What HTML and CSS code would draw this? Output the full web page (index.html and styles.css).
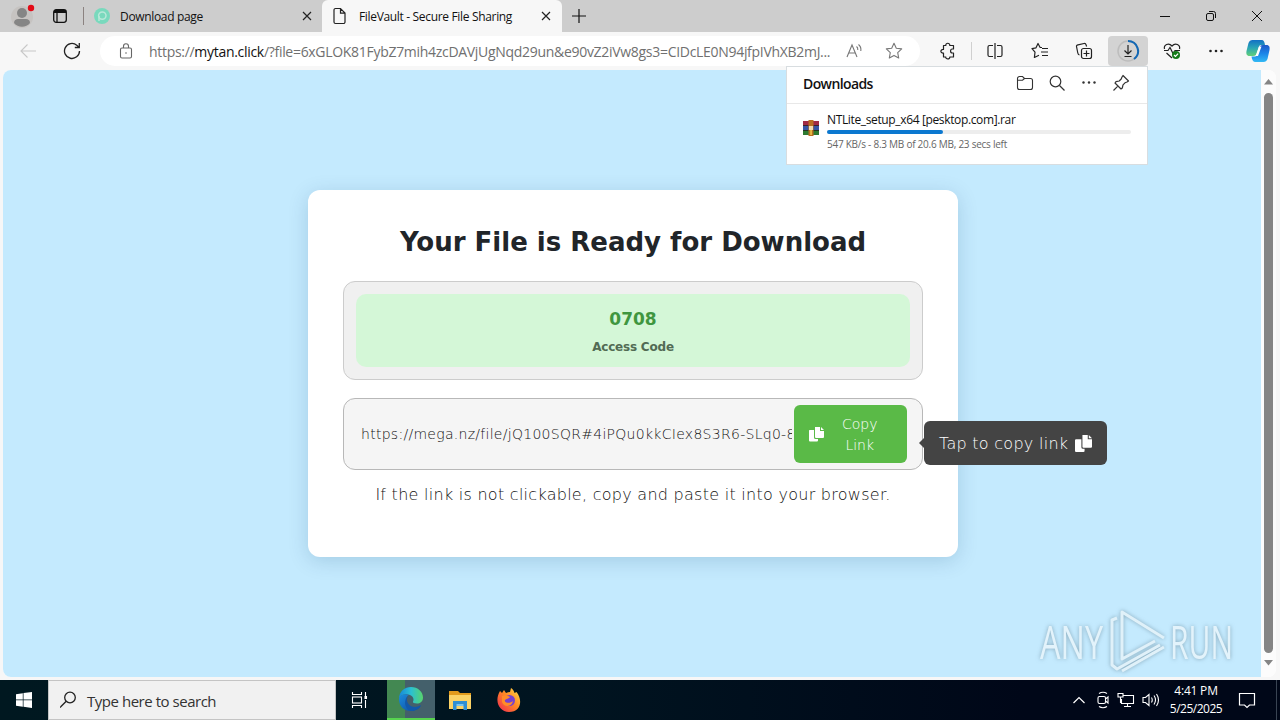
FILE: index.html
```
<!DOCTYPE html>
<html lang="en">
<head>
    <meta charset="UTF-8">
    <meta name="viewport" content="width=device-width, initial-scale=1.0">
    <title>FileVault - Secure File Sharing</title>
    <link rel="stylesheet" href="styles.css">
</head>
<body>
    <!-- Tabs -->
    <div class="tab-strip">
        <div class="profile">
            <svg width="32" height="32" viewBox="0 0 32 32"><circle cx="16" cy="17" r="11" fill="#c6c3c1"/><circle cx="16" cy="13" r="5" fill="#858585"/><path d="M8 23c0-3 2-4 4-4h8c2 0 4 1 4 4-4 5-12 5-16 0z" fill="#858585"/><circle cx="25" cy="8" r="3.2" fill="#e30b17"/></svg>
        </div>
        <div class="workspaces">
            <svg width="16" height="16" viewBox="0 0 16 16" fill="none" stroke="#111" stroke-width="1.3"><rect x="1.7" y="1.7" width="12.6" height="12.6" rx="2.5"/><path d="M2 3.5h12" stroke-width="3"/><path d="M5 4v10"/></svg>
        </div>
        <div class="tab">
            <svg class="tab-icon" width="18" height="18" viewBox="0 0 18 18"><circle cx="9" cy="9" r="8" fill="#79d9bd"/><circle cx="9.3" cy="8.6" r="3.7" fill="none" stroke="#b9e8d9" stroke-width="1.5"/><path d="M6 9v5" stroke="#b9e8d9" stroke-width="1.5"/></svg>
            <span class="tab-title">Download page</span>
            <svg class="tab-close" width="10" height="10" viewBox="0 0 10 10" stroke="#222" stroke-width="1.2"><path d="M1 1l8 8M9 1l-8 8"/></svg>
        </div>
        <div class="tab active">
            <svg class="tab-icon" width="18" height="18" viewBox="0 0 18 18" fill="none" stroke="#222" stroke-width="1.2"><path d="M4.500 1.500h5l4.500 4.500v9a1.500 1.500 0 0 1-1.500 1.500h-8a1.500 1.500 0 0 1-1.500-1.500v-12a1.500 1.500 0 0 1 1.500-1.500zM9.500 1.700v4.500h4.300"/></svg>
            <span class="tab-title">FileVault - Secure File Sharing</span>
            <svg class="tab-close" width="10" height="10" viewBox="0 0 10 10" stroke="#222" stroke-width="1.2"><path d="M1 1l8 8M9 1l-8 8"/></svg>
        </div>
        <div class="new-tab">
            <svg width="14" height="14" viewBox="0 0 14 14" stroke="#111" stroke-width="1.2"><path d="M7 0v14M0 7h14"/></svg>
        </div>
        <div class="window-buttons">
            <svg width="10" height="10" viewBox="0 0 10 10" stroke="#111"><path d="M0 5.500h10"/></svg>
            <svg width="10" height="10" viewBox="0 0 10 10" fill="none" stroke="#111"><rect x=".5" y="2.500" width="7" height="7" rx="1.500"/><path d="M3 .5h4.500q2 0 2 2v4.500"/></svg>
            <svg width="10" height="10" viewBox="0 0 10 10" stroke="#111"><path d="M0 0l10 10M10 0L0 10"/></svg>
        </div>
    </div>

    <!-- Toolbar -->
    <div class="toolbar">
        <div class="tool nav"><svg width="16" height="16" viewBox="0 0 16 16" fill="none" stroke="#c8c8c8" stroke-width="1.1"><path d="M7.500 1.500L1 8l6.500 6.500M1 8h15"/></svg></div>
        <div class="tool nav"><svg width="18" height="18" viewBox="0 0 18 18" fill="none" stroke="#222" stroke-width="1.300"><path d="M16.500 9a7.500 7.500 0 1 1-2.700-5.800L16 5.200M16.300 1v4.500h-4.500"/></svg></div>
        <div class="address">
            <svg class="lock" width="14" height="16" viewBox="0 0 14 16" fill="none" stroke="#666" stroke-width="1.100"><rect x="1.500" y="5" width="11" height="10" rx="1.500"/><path d="M4.500 5V3.200a2.500 2.500 0 0 1 5 0V5"/><circle cx="7" cy="10" r=".8" fill="#666" stroke="none"/></svg>
            <span class="url">https://<b>mytan.click</b>/?file=6xGLOK81FybZ7mih4zcDAVjUgNqd29un&amp;e90vZ2iVw8gs3=CIDcLE0N94jfpIVhXB2mJ...</span>
            <svg class="read" width="18" height="16" viewBox="0 0 18 16" fill="none" stroke="#777" stroke-width="1.100"><path d="M1 14L6 2l5 12M3 10h6M10.500 3.500q1.500 1 1.300 3.500M12.500 1.500q3 2.500 2.300 6.500"/></svg>
            <svg class="star" width="18" height="18" viewBox="0 0 18 18" fill="none" stroke="#777" stroke-width="1.100" stroke-linejoin="round"><path d="M9 1.300l2.300 4.900 5.400.7-4 3.700 1 5.400L9 13.400 4.300 16l1-5.400-4-3.700 5.400-.7z"/></svg>
        </div>
        <div class="tool ext"><svg width="18" height="18" viewBox="0 0 18 18" fill="none" stroke="#222" stroke-width="1.200" stroke-linejoin="round"><path d="M4.500 3.500h2.300c-.5-3 4.400-3 4 0h3.700v3.500h-1.200c-2.300 0-2.300 4 0 4h1.200v4h-3.700c.4 2.500-4.500 2.500-4 0H4.500v-4C1 11.500 1 7 4.500 7.500z"/></svg></div>
        <div class="divider"></div>
        <div class="tool split"><svg width="18" height="18" viewBox="0 0 18 18" fill="none" stroke="#222" stroke-width="1.200"><path d="M9 1v16M7 3.500H3.500a1.500 1.500 0 0 0-1.500 1.500v8a1.500 1.500 0 0 0 1.500 1.500H7M11 3.500h3.500A1.500 1.500 0 0 1 16 5v8a1.500 1.500 0 0 1-1.500 1.500H11"/></svg></div>
        <div class="tool"><svg width="18" height="18" viewBox="0 0 18 18" fill="none" stroke="#222" stroke-width="1.200" stroke-linejoin="round"><path d="M11 5.500L9 5.300 7 1.500 5 5.800l-4 .8 3 3.600-.6 5.300L8 13.300M11 6.500h6M10 10h7M11 13.500h6"/></svg></div>
        <div class="tool"><svg width="18" height="18" viewBox="0 0 18 18" fill="none" stroke="#222" stroke-width="1.200" stroke-linejoin="round"><rect x="6.500" y="6.500" width="10" height="10" rx="2"/><path d="M11.500 8.500v6M8.500 11.500h6M4.500 13c-1.200-.3-1.500-1-1.700-2L1.500 4.500C1.300 3.500 2 3 3 2.800l6-1.300c1.200-.2 1.800.3 2.100 1.300L11.600 4.500"/></svg></div>
        <div class="tool downloads-button"><svg width="24" height="24" viewBox="0 0 24 24" fill="none"><circle cx="12" cy="12" r="10" stroke="#bdbdbd" stroke-width="1.500"/><path d="M12 2a10 10 0 0 1 6 18" stroke="#1267b4" stroke-width="2"/><path d="M12 6v9M8.500 11.500L12 15l3.500-3.500M8.500 17.500h7" stroke="#222" stroke-width="1.200"/></svg></div>
        <div class="tool"><svg width="18" height="18" viewBox="0 0 18 18" fill="none" stroke="#222" stroke-width="1.200"><path d="M1.500 7C.5 3 5.500 0 9 4c3.500-4 8.500-1 7.500 3M1 8.500h4l2-3 3 6 2-3h5M3.500 11L9 16"/><circle cx="13" cy="13" r="4" fill="#147b19" stroke="none"/><path d="M11 13l1.500 1.500 2.600-2.800" stroke="#fff"/></svg></div>
        <div class="tool"><svg width="16" height="16" viewBox="0 0 16 16" fill="#222"><circle cx="2.500" cy="8" r="1.300"/><circle cx="8" cy="8" r="1.300"/><circle cx="13.500" cy="8" r="1.300"/></svg></div>
        <div class="tool copilot">
            <svg width="24" height="24" viewBox="0 0 24 24">
                <defs>
                    <linearGradient id="cp1" x1="0" y1="0" x2="0" y2="1"><stop offset="0" stop-color="#1270c5"/><stop offset=".5" stop-color="#2aa6b5"/><stop offset="1" stop-color="#62d078"/></linearGradient>
                    <linearGradient id="cp2" x1="0" y1="0" x2="0" y2="1"><stop offset="0" stop-color="#1e58c8"/><stop offset=".5" stop-color="#1b85e8"/><stop offset="1" stop-color="#32b9f4"/></linearGradient>
                </defs>
                <path d="M6.500 1h9c2.500 0 3 2 3.500 5h-4c-1.500 0-2 1-2.500 3l-1.300 4.500C10.500 16 9.500 17 7 17H3.500C.5 17 0 14.500.5 12L2.500 4C3.300 2 4.500 1 6.500 1z" fill="url(#cp1)"/>
                <path d="M17.500 23h-8C7 23 6 21 5.500 17.500H9c1.500 0 2-1 2.500-3l1.300-4.500c.7-2.500 1.700-4 4.200-4h3.500c3 0 3.500 2.500 3 5l-2 9c-.8 2-2 3-4 3z" fill="url(#cp2)"/>
                <path d="M13 7.500h2.500l-3.500 9.500H9.500z" fill="#fff"/>
            </svg>
        </div>

        <div class="downloads">
            <div class="downloads-head">
                <span class="downloads-title">Downloads</span>
                <svg width="18" height="18" viewBox="0 0 18 18" fill="none" stroke="#333" stroke-width="1.100"><path d="M1.500 4.500a2 2 0 0 1 2-2h3l2 2h6a2 2 0 0 1 2 2v7a2 2 0 0 1-2 2h-11a2 2 0 0 1-2-2zM1.500 6.200h5l2-1.700"/></svg>
                <svg width="18" height="18" viewBox="0 0 18 18" fill="none" stroke="#333" stroke-width="1.200"><circle cx="7.500" cy="7.500" r="5.300"/><path d="M11.500 11.500L16.500 16.500"/></svg>
                <svg width="18" height="18" viewBox="0 0 18 18" fill="#333"><circle cx="3.500" cy="8.500" r="1.200"/><circle cx="9" cy="8.500" r="1.200"/><circle cx="14.500" cy="8.500" r="1.200"/></svg>
                <svg width="18" height="18" viewBox="0 0 18 18" fill="none" stroke="#333" stroke-width="1.200" stroke-linejoin="round"><path d="M11 1.500l5.500 5.500-1.500 1-2 .8-2 2-.7 3.200-1.300 1L3 9l1-1.300 3.200-.7 2-2 .8-2zM5.800 12.200L1.500 16.500"/></svg>
            </div>
            <div class="download-item">
                <svg class="rar" width="16" height="16" viewBox="0 0 16 16"><path d="M0 1h16v5H0z" fill="#a12a44"/><path d="M0 6h16v4H0z" fill="#3656a5"/><path d="M0 10h16v5H0z" fill="#2d7a31"/><path d="M0 5.500h16M0 10.500h16" stroke="#222" stroke-width=".8"/><path d="M5.500 0h5v16h-5z" fill="#b96f22"/><path d="M6 6h4v4H6z" fill="#f0ddb0"/><path d="M7.300 10h1.500v5H7.300z" fill="#f4cb4b"/></svg>
                <div class="download-info">
                    <div class="download-name"><span>NTLite_setup_x64 [pesktop.com].rar</span></div>
                    <div class="progress"><div class="progress-value" style="width: 38.2%"></div></div>
                    <div class="download-status"><span>547 KB/s - 8.3 MB of 20.6 MB, 23 secs left</span></div>
                </div>
            </div>
        </div>
    </div>

    <!-- Page -->
    <div class="viewport">
        <div class="page">
            <div class="container">
                <h1><span>Your File is Ready for Download</span></h1>
                <div class="access-box">
                    <div class="access">
                        <div class="code">0708</div>
                        <div class="code-label"><span>Access Code</span></div>
                    </div>
                </div>
                <div class="link-box">
                    <div class="link">https://mega.nz/file/jQ100SQR#4iPQu0kkCIex8S3R6-SLq0-8</div>
                    <button class="copy-button">
                        <svg width="16" height="16" viewBox="0 0 16 16" fill="#fff"><path d="M7 1h5v4h4v6a1 1 0 0 1-1 1H8a1 1 0 0 1-1-1zM13 1l3 3h-3z"/><path d="M1.500 4H6v7.500A1.500 1.500 0 0 0 7.500 13H10v1.500a1 1 0 0 1-1 1H2a1 1 0 0 1-1-1V4.500z"/></svg>
                        <span>Copy<br>Link</span>
                    </button>
                    <div class="tooltip">
                        <span>Tap to copy link</span>
                        <svg width="17" height="17" viewBox="0 0 16 16" fill="#fff"><path d="M7 0h5v4h4v7a1 1 0 0 1-1 1H8a1 1 0 0 1-1-1zM13 0l3 3h-3z"/><path d="M1 4h5v7.500A1.500 1.500 0 0 0 7.500 13H9v2a1 1 0 0 1-1 1H1a1 1 0 0 1-1-1V5a1 1 0 0 1 1-1z"/></svg>
                    </div>
                </div>
                <p class="note"><span>If the link is not clickable, copy and paste it into your browser.</span></p>
            </div>
            <svg class="watermark" width="200" height="66" viewBox="0 0 200 66">
                <g class="wm-text">
                    <text x="2" y="50" textLength="63" lengthAdjust="spacingAndGlyphs">ANY</text>
                    <text x="132" y="50" textLength="63" lengthAdjust="spacingAndGlyphs">RUN</text>
                </g>
                <g class="wm-logo">
                    <path d="M79 9l-5 2v45l5 4 43-24M84 50V3l42 26M84 12v38l33-18M84 62l42-24"/>
                </g>
            </svg>
        </div>
        <div class="scrollbar">
            <svg width="9" height="6" viewBox="0 0 9 6" fill="#858585"><path d="M4.500 0L9 5.500H0z"/></svg>
            <div class="thumb"></div>
            <svg width="9" height="6" viewBox="0 0 9 6" fill="#858585"><path d="M4.500 5.500L9 0H0z"/></svg>
        </div>
    </div>

    <!-- Taskbar -->
    <div class="taskbar">
        <div class="start"><svg width="16" height="16" viewBox="0 0 16 16" fill="#fff"><path d="M0 2.200l6.800-1v6.300H0zM7.500 1.100L16 0v7.500H7.500zM0 8.300h6.800v6.400l-6.800-1zM7.500 8.300H16V16l-8.500-1.200z"/></svg></div>
        <div class="search">
            <svg width="18" height="18" viewBox="0 0 18 18" fill="none" stroke="#222" stroke-width="1.300"><circle cx="10" cy="6.500" r="5.300"/><path d="M6.200 10.300L0 16.500"/></svg>
            <span>Type here to search</span>
        </div>
        <div class="task"><svg width="18" height="18" viewBox="0 0 18 18" fill="none" stroke="#fff" stroke-width="1.100"><path d="M1.500 1v2.500h9V1M1.500 17v-2.500h9V17M14.500 1v4M14.500 9v8"/><rect x="1.500" y="6" width="9" height="6"/><path d="M14 5.500h1.500v2H14z" fill="#fff"/></svg></div>
        <div class="task edge">
            <svg width="26" height="26" viewBox="0 0 26 26">
                <defs>
                    <linearGradient id="e1"><stop offset="0" stop-color="#1687d9"/><stop offset=".5" stop-color="#2bc0d2"/><stop offset="1" stop-color="#58d36c"/></linearGradient>
                    <linearGradient id="e2" x1="0" y1="0" x2="1" y2="1"><stop offset="0" stop-color="#1b8bdd"/><stop offset="1" stop-color="#0c4a9c"/></linearGradient>
                </defs>
                <path d="M1 13C1 5 7 1 13 1c7 0 12 5 12 10.500 0 4-3 6-6 6-3 0-4.500-1-4-2 1-1 1-5-3-6.500C7 7 2 9 1 13z" fill="url(#e1)"/>
                <path d="M1 13c.5-4 5.500-6 10-4-4 1-5 11 5 12.500 3 .4 5-.5 7-2C19 26 12 25 9 24.500 4 23 1 18.500 1 13z" fill="url(#e2)"/>
                <path d="M11 9.500c-2.500 2-3 6 0 9 3.500 3.500 8 3 12 .5-2 4-6 6-10 6C6 23 5 13 11 9.500z" fill="#1258a9"/>
            </svg>
        </div>
        <div class="task"><svg width="22" height="20" viewBox="0 0 22 20"><path d="M0 1h9l2 2h11v3H0z" fill="#e29b1c"/><path d="M0 5h22v14H0z" fill="#fbd366"/><path d="M4 11h14v9h-3.500v-4h-7v4H4z" fill="#2f8fd3"/><path d="M7.500 14h7v2h-7z" fill="#7ac5ef"/></svg></div>
        <div class="task firefox">
            <svg width="24" height="24" viewBox="0 0 24 24">
                <defs><linearGradient id="ff" x1="1" y1="0" x2="0" y2="1"><stop offset="0" stop-color="#ffe24a"/><stop offset=".45" stop-color="#ff8a24"/><stop offset="1" stop-color="#ef2354"/></linearGradient></defs>
                <path d="M3 3l2 2 2-3 2 3q2-1 4-1l1-4c2 1 3 3 3.500 5l2-1C26 12 24 24 12 24 2 24-3 13 3 3z" fill="url(#ff)"/>
                <circle cx="12.500" cy="12.500" r="5.500" fill="#7641cf"/>
                <path d="M5 8q4-2 8 1c-1 2-4 1.500-5 3-1 3 5 4 8 1-1 6-9 7-11 1z" fill="#ff8c28"/>
            </svg>
        </div>
        <div class="tray">
            <svg width="12" height="8" viewBox="0 0 12 8" fill="none" stroke="#fff" stroke-width="1.200"><path d="M.5 7L6 1.500 11.500 7"/></svg>
            <svg width="14" height="18" viewBox="0 0 14 18" fill="none" stroke="#fff" stroke-width="1.100"><rect x="2" y="5.500" width="7.500" height="7" rx="1.500"/><path d="M9.500 8L12 6v6l-2.500-2M3 2.500q4-2.500 8 0M3 15.500q4 2.500 8 0"/></svg>
            <svg width="18" height="16" viewBox="0 0 18 16" fill="none" stroke="#fff" stroke-width="1.100"><path d="M6 3.500h10.500v8H4.500V7M10.500 11.500V14M7 14.500h7M1 1.500h5v3.500H1zM3.500 5v6"/></svg>
            <svg width="18" height="16" viewBox="0 0 18 16" fill="none" stroke="#fff" stroke-width="1.100"><path d="M1 5.500h2.500l3.500-3v11l-3.500-3H1zM9.500 5.500q1.500 2.500 0 5M12 3.500q3 4.500 0 9M14.500 2q4 6 0 12"/></svg>
            <div class="clock"><span class="time">4:41 PM</span><span class="date">5/25/2025</span></div>
            <svg class="notice" width="18" height="17" viewBox="0 0 18 17" fill="none" stroke="#fff" stroke-width="1.200"><path d="M1.500 1.500h15v11.500h-5L9 15.500 6.500 13h-5z"/></svg>
        </div>
    </div>
</body>
</html>
```
FILE: styles.css
```
* {
    box-sizing: border-box;
}
body {
    margin: 0;
    width: 1280px;
    height: 720px;
    overflow: hidden;
    display: flex;
    flex-direction: column;
    background-color: #f7f7f7;
    font-family: "Open Sans", "Noto Sans", sans-serif;
    color: #111;
}
svg {
    display: block;
    flex: none;
}
span {
    white-space: nowrap;
}

/* Tabs */
.tab-strip {
    display: flex;
    align-items: center;
    height: 32px;
    background-color: #cdcdcd;
    font-size: 12px;
    letter-spacing: -0.33px;
}
.profile {
    width: 44px;
    padding-left: 6px;
}
.workspaces {
    width: 40px;
    height: 18px;
    padding: 1px 0 0 8px;
    border-right: 1px solid #8b8280;
}
.tab {
    display: flex;
    align-items: center;
    width: 238px;
    height: 32px;
    padding: 0 10px 0 9px;
}
.tab.active {
    width: 240px;
    background-color: #f7f7f7;
    border-radius: 6px 6px 0 0;
    padding-right: 11px;
}
.tab-icon {
    margin-right: 9px;
}
.tab.active .tab-icon {
    margin-right: 10px;
}
.tab-close {
    margin-left: auto;
}
.new-tab {
    padding-left: 10px;
}
.window-buttons {
    display: flex;
    gap: 36px;
    margin-left: auto;
    padding-right: 18px;
}

/* Toolbar */
.toolbar {
    position: relative;
    display: flex;
    align-items: center;
    height: 38px;
    padding-left: 6px;
    background-color: #f7f7f7;
}
.tool {
    display: flex;
    align-items: center;
    justify-content: center;
    width: 44px;
    height: 30px;
}
.address {
    display: flex;
    align-items: center;
    width: 820px;
    height: 30px;
    margin-left: 6px;
    padding-left: 19px;
    border-radius: 15px;
    background-color: #fff;
}
.url {
    width: 686px;
    margin-left: 16px;
    font-size: 14px;
    letter-spacing: -0.3px;
    color: #707070;
}
.url b {
    font-weight: normal;
    color: #111;
}
.read {
    margin-left: 11px;
}
.star {
    margin-left: 21px;
}
.ext {
    margin-left: 6px;
}
.divider {
    width: 1px;
    height: 18px;
    margin-left: 1px;
    background-color: #d0d0d0;
}
.split {
    width: 46px;
}
.downloads-button {
    width: 40px;
    margin: 0 2px;
    border-radius: 4px;
    background-color: #d3d3d3;
}
.copilot {
    width: 40px;
}

/* Downloads menu */
.downloads {
    position: absolute;
    top: 34px;
    left: 786px;
    z-index: 2;
    width: 362px;
    height: 99px;
    border: 1px solid #d8dde0;
    background-color: #fff;
}
.downloads-head {
    display: flex;
    align-items: center;
    gap: 14px;
    height: 37px;
    padding: 0 17px 4px 16px;
    border-bottom: 1px solid #e8e8e8;
}
.downloads-title {
    margin-right: auto;
    font-size: 14px;
    font-weight: 600;
    letter-spacing: -0.6px;
}
.download-item {
    display: flex;
    padding: 8px 16px;
}
.rar {
    margin: 8px 8px 0 0;
}
.download-info {
    flex: 1;
}
.download-name {
    height: 18px;
    font-size: 12px;
    line-height: 16px;
    letter-spacing: -0.36px;
}
.progress {
    height: 4px;
    border-radius: 2px;
    background-color: #ededed;
}
.progress-value {
    height: 4px;
    border-radius: 2px;
    background-color: #0b78d0;
}
.download-status {
    margin-top: 3px;
    font-size: 10px;
    line-height: 15px;
    letter-spacing: -0.25px;
    color: #666;
}

/* Page */
.viewport {
    display: flex;
    height: 607px;
    margin: 0 4px 3px 3px;
    overflow: hidden;
    border-radius: 8px;
    background-color: #fff;
}
.page {
    position: relative;
    display: flex;
    align-items: center;
    justify-content: center;
    width: 1258px;
    padding-left: 2px;
    background-color: #c4eafe;
    font-family: Verdana, "DejaVu Sans", sans-serif;
}
.container {
    width: 650px;
    height: 367px;
    padding: 36px 35px 35px;
    border-radius: 12px;
    background-color: #fff;
    box-shadow: 0 4px 20px rgba(0, 60, 100, 0.17);
}
h1 {
    margin: 0 0 22px;
    font-size: 26px;
    line-height: 33px;
    text-align: center;
    color: #212529;
}
.access-box {
    height: 99px;
    padding: 12px;
    border: 1px solid #ccc;
    border-radius: 12px;
    background-color: #f0f0f0;
}
.access {
    height: 73px;
    padding-top: 13px;
    border-radius: 10px;
    background-color: #d4f7d7;
    text-align: center;
    font-weight: bold;
}
.code {
    font-size: 17px;
    line-height: 24px;
    color: #3f963f;
}
.code-label {
    margin-top: 7px;
    font-size: 12px;
    line-height: 18px;
    letter-spacing: -0.2px;
    color: #526b54;
}
.link-box {
    position: relative;
    display: flex;
    align-items: center;
    height: 72px;
    margin-top: 18px;
    padding: 0 15px 0 17px;
    border: 1px solid #b8b8b8;
    border-radius: 12px;
    background-color: #f5f5f5;
    font-weight: 200;
}
.link {
    width: 431px;
    margin-right: 2px;
    overflow: hidden;
    white-space: nowrap;
    font-size: 14px;
    letter-spacing: 0.28px;
}
.copy-button {
    display: flex;
    align-items: center;
    flex: none;
    width: 113px;
    height: 58px;
    padding: 0 0 0 14px;
    border: none;
    border-radius: 6px;
    background-color: #5aba47;
    color: #fff;
    font-family: inherit;
    font-weight: inherit;
    font-size: 14px;
    line-height: 21px;
}
.copy-button span {
    margin: 2px 0 0 18px;
}
.tooltip {
    position: absolute;
    top: 22px;
    left: 580px;
    display: flex;
    align-items: center;
    width: 183px;
    height: 44px;
    padding-left: 15px;
    border-radius: 6px;
    background-color: #444;
    color: #fff;
    font-size: 16px;
    letter-spacing: 0.28px;
}
.tooltip::before {
    content: "";
    position: absolute;
    left: -5px;
    top: 17px;
    border: 5px solid transparent;
    border-left: 0;
    border-right-color: #444;
}
.tooltip svg {
    margin-left: 7px;
}
.note {
    margin: 13px 0 0;
    font-size: 16px;
    font-weight: 200;
    line-height: 24px;
    letter-spacing: 0.27px;
    text-align: center;
}
.watermark {
    position: absolute;
    right: 23px;
    bottom: 2px;
    overflow: visible;
    filter: drop-shadow(0 0 2px rgba(80, 110, 125, 0.55));
}
.wm-text {
    font: 45px "Open Sans", sans-serif;
    fill: #e3f3fb;
}
.wm-logo {
    fill: none;
    stroke: #e0f1f9;
    stroke-width: 3;
    stroke-linejoin: round;
}
.scrollbar {
    display: flex;
    flex-direction: column;
    align-items: center;
    justify-content: space-between;
    width: 15px;
    padding: 9px 0 11px;
    background-color: #fcfcfc;
}
.thumb {
    width: 9px;
    height: 560px;
    border-radius: 5px;
    background-color: #858585;
}

/* Taskbar */
.taskbar {
    display: flex;
    height: 40px;
    background: linear-gradient(90deg, #001820, #001420 45%, #000718 80%);
}
.start, .task {
    display: flex;
    align-items: center;
    justify-content: center;
    width: 48px;
}
.search {
    display: flex;
    align-items: center;
    width: 288px;
    padding-left: 11px;
    border: 1px solid #c4c4c4;
    background-color: #f1f1f1;
    font-size: 15px;
    letter-spacing: -0.47px;
    color: #333;
}
.search span {
    margin: 1px 0 0 9px;
}
.edge {
    margin-left: 3px;
    border-bottom: 2px solid #57d44f;
    background: linear-gradient(90deg, #438852 37%, #44606b 37%);
}
.edge + .task {
    margin-left: 1px;
}
.firefox {
    margin-left: 1px;
}
.tray {
    display: flex;
    align-items: center;
    margin-left: auto;
    padding-right: 4px;
    border-right: 1px solid #394453;
    margin-right: 3px;
    color: #fff;
    font-size: 12px;
}
.tray svg {
    margin-right: 7px;
}
.tray svg:first-child {
    margin-right: 11px;
}
.clock {
    display: flex;
    flex-direction: column;
    align-items: center;
    width: 58px;
    line-height: 18px;
}
.time {
    letter-spacing: -0.2px;
}
.date {
    letter-spacing: -0.5px;
}
.tray .notice {
    margin: 0 16px 0 13px;
}
```
